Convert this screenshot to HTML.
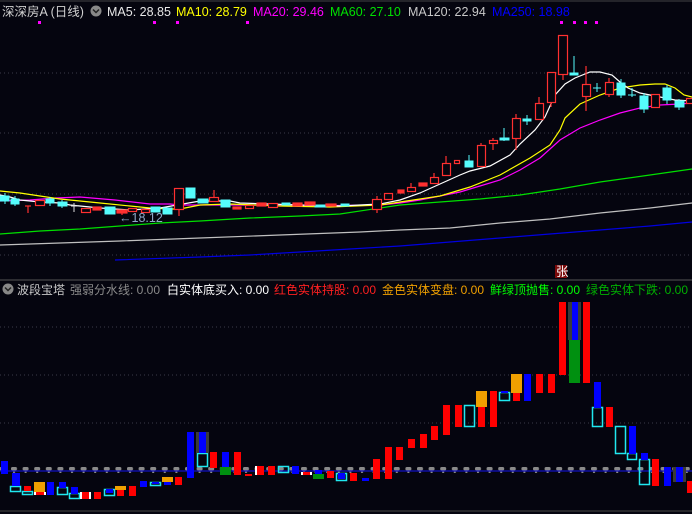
<!DOCTYPE html><html><head><meta charset="utf-8"><style>
html,body{margin:0;padding:0;background:#05050f;width:692px;height:514px;overflow:hidden}
svg{display:block}
text{font-family:"Liberation Sans","Noto Sans CJK SC",sans-serif;font-size:12.5px}
.lh text{font-size:12px}
</style></head><body>
<svg width="692" height="514" xmlns="http://www.w3.org/2000/svg">
<defs>
<pattern id="gd" x="11" y="0" width="11.6" height="514" patternUnits="userSpaceOnUse"><rect x="0" y="467" width="6" height="3.5" rx="1.5" fill="#8a8a8a"/><rect x="2" y="471" width="2" height="2" fill="#8a8a8a"/></pattern>
</defs>
<rect width="692" height="514" fill="#05050f"/>
<line x1="0" y1="1" x2="692" y2="1" stroke="#444" />
<g stroke="#3a3a4a" stroke-dasharray="1,3">
<line x1="0" y1="73" x2="692" y2="73"/><line x1="0" y1="133" x2="692" y2="133"/><line x1="0" y1="194" x2="692" y2="194"/><line x1="0" y1="255" x2="692" y2="255"/>
<line x1="0" y1="327" x2="692" y2="327"/><line x1="0" y1="375" x2="692" y2="375"/><line x1="0" y1="423" x2="692" y2="423"/>
</g>
<line x1="0" y1="280" x2="692" y2="280" stroke="#555" />
<line x1="0" y1="511" x2="692" y2="511" stroke="#333" stroke-width="1.5"/>
<!-- header -->
<text x="2" y="16" fill="#d0d0d0">深深房A (日线)</text>
<circle cx="96" cy="11" r="5.5" fill="#888"/><path d="M93 9.5 L96 12.5 L99 9.5" stroke="#222" stroke-width="1.5" fill="none"/>
<text x="107" y="16" fill="#e8e8e8">MA5: 28.85</text>
<text x="176" y="16" fill="#ffff00">MA10: 28.79</text>
<text x="253" y="16" fill="#ff00ff">MA20: 29.46</text>
<text x="330" y="16" fill="#00e000">MA60: 27.10</text>
<text x="408" y="16" fill="#c8c8c8">MA120: 22.94</text>
<text x="492" y="16" fill="#0000ff">MA250: 18.98</text>
<g fill="#ff00ff"><rect x="38" y="21" width="3" height="3"/><rect x="153" y="21" width="3" height="3"/><rect x="176" y="21" width="3" height="3"/><rect x="246" y="21" width="3" height="3"/><rect x="560" y="21" width="3" height="3"/><rect x="573" y="21" width="3" height="3"/><rect x="584" y="21" width="3" height="3"/><rect x="595" y="21" width="3" height="3"/></g>
<!-- MAs -->
<g fill="none" stroke-width="1.2">
<polyline stroke="#0000e0" points="115,260 200,257 250,255 300,252 350,249 400,246 450,242 500,238 550,234 600,230 650,226 692,222"/>
<polyline stroke="#c0c0c0" points="0,245 60,243 120,241 200,238 280,235 360,232 400,230 450,228 500,223 550,219 600,213 650,208 692,203"/>
<polyline stroke="#00e000" points="0,234 40,231 80,229 120,226 160,223 200,221 250,218 300,216 340,214 400,205 440,202 480,199 520,195 560,189 600,182 650,175 692,169"/>
<polyline stroke="#ff00ff" points="0,201 30,200 56,198 80,197 115,200 150,204 170,204 180,205 250,205 300,206 380,205 400,203 420,200 440,196 460,192 480,186 500,180 520,170 540,158 560,140 580,128 600,120 620,113 640,108 660,105 680,104 692,103"/>
<polyline stroke="#ffff00" points="0,191 20,193 40,196 60,199 80,201 100,203 130,206 150,208 170,209 180,209 200,205 230,204 280,206 330,207 380,205 400,202 440,196 470,187 500,175 530,158 550,145 560,130 565,118 580,104 600,95 620,88 640,85 655,84 665,84 675,88 684,95 692,97"/>
<polyline stroke="#ffffff" points="0,195 10,197 20,200 40,202 60,203 70,205 100,208 130,210 160,208 200,201 230,201 240,203 300,205 340,206 380,204 400,200 420,193 440,184 460,175 470,171 490,166 510,155 520,144 535,130 545,117 555,95 565,84 575,78 590,72 600,72 612,75 620,82 628,88 640,93 660,97 675,100 692,101"/>
</g>
<!-- candles: cyan filled -->
<g stroke="#55fcfc" fill="#55fcfc">
<line x1="5" y1="193" x2="5" y2="204"/><rect x="0" y="196" width="9" height="5"/>
<line x1="15" y1="196" x2="15" y2="206"/><rect x="11" y="199" width="8" height="5"/>
<line x1="50" y1="197" x2="50" y2="206"/><rect x="46" y="199" width="8" height="4"/>
<line x1="62" y1="200" x2="62" y2="208"/><rect x="58" y="202" width="9" height="4"/>
<line x1="74" y1="203" x2="74" y2="212" stroke="#ddd"/><line x1="71" y1="206" x2="78" y2="206" stroke="#ddd"/>
<rect x="105" y="207" width="10" height="7"/>
<rect x="151" y="207" width="9" height="5"/><rect x="163" y="208" width="9" height="6"/>
<rect x="186" y="188" width="9" height="10"/><rect x="198" y="199" width="10" height="4"/>
<rect x="221" y="200" width="9" height="7"/><rect x="282" y="203" width="8" height="2"/>
<rect x="315" y="205" width="11" height="2"/><rect x="341" y="204" width="8" height="2"/>
<line x1="469" y1="155" x2="469" y2="167"/><rect x="465" y="161" width="8" height="6"/>
<line x1="504" y1="128" x2="504" y2="141"/><rect x="500" y="138" width="9" height="2"/>
<line x1="527" y1="115" x2="527" y2="125"/><rect x="523" y="119" width="8" height="2"/>
<line x1="574" y1="56" x2="574" y2="75"/><rect x="570" y="73" width="8" height="2"/>
<line x1="597" y1="83" x2="597" y2="92"/><line x1="593" y1="88" x2="601" y2="88"/>
<line x1="621" y1="79" x2="621" y2="98"/><rect x="617" y="83" width="8" height="12"/>
<line x1="632" y1="88" x2="632" y2="97"/><line x1="628" y1="95" x2="636" y2="95"/>
<line x1="644" y1="93" x2="644" y2="113"/><rect x="640" y="96" width="8" height="13"/>
<line x1="667" y1="85" x2="667" y2="104"/><rect x="663" y="88" width="8" height="12"/>
<line x1="679" y1="99" x2="679" y2="110"/><rect x="675" y="101" width="9" height="6"/>
</g>
<!-- red candles -->
<g stroke="#ff3030" fill="#05050f" stroke-width="1.2">
<line x1="28" y1="206" x2="28" y2="213"/><line x1="25" y1="206" x2="31" y2="206"/>
<rect x="35.5" y="200.5" width="9" height="5"/>
<rect x="81.5" y="208.5" width="9" height="4"/><rect x="93" y="207" width="8" height="3" fill="#ff3030"/>
<line x1="122" y1="210" x2="122" y2="215"/><rect x="117" y="210" width="10" height="3" fill="#ff3030"/>
<rect x="128.5" y="208.5" width="8" height="3"/><rect x="141.5" y="209.5" width="8" height="3"/>
<line x1="179" y1="188" x2="179" y2="216"/><rect x="174.5" y="188.5" width="9" height="21"/>
<line x1="214" y1="190" x2="214" y2="197"/><rect x="209.5" y="197.5" width="9" height="4"/>
<rect x="233" y="207" width="8" height="2" fill="#ff3030"/><rect x="245.5" y="205.5" width="8" height="3"/>
<rect x="257" y="203" width="9" height="3" fill="#ff3030"/><rect x="268.5" y="203.5" width="9" height="4"/>
<rect x="293" y="203" width="9" height="3" fill="#ff3030"/><rect x="305" y="202" width="10" height="3" fill="#ff3030"/>
<rect x="326" y="204" width="10" height="2" fill="#ff3030"/>
<line x1="377" y1="196" x2="377" y2="213"/><rect x="372.5" y="199.5" width="9" height="10"/>
<rect x="384.5" y="193.5" width="8" height="6"/><rect x="398" y="190" width="6" height="3" fill="#ff3030"/>
<line x1="411" y1="183" x2="411" y2="192"/><rect x="407.5" y="187.5" width="8" height="4"/>
<rect x="419" y="183" width="8" height="3" fill="#ff3030"/>
<line x1="434" y1="173" x2="434" y2="184"/><rect x="430.5" y="177.5" width="8" height="6"/>
<line x1="446" y1="156" x2="446" y2="176"/><rect x="442.5" y="163.5" width="8" height="12"/>
<rect x="454.5" y="160.5" width="5" height="3"/>
<line x1="481" y1="143" x2="481" y2="167"/><rect x="477.5" y="145.5" width="8" height="21"/>
<line x1="493" y1="138" x2="493" y2="150"/><rect x="489.5" y="140.5" width="8" height="3"/>
<line x1="516" y1="114" x2="516" y2="150"/><rect x="512.5" y="118.5" width="8" height="20"/>
<line x1="539" y1="97" x2="539" y2="120"/><rect x="535.5" y="103.5" width="8" height="16"/>
<line x1="551" y1="72" x2="551" y2="107"/><rect x="547.5" y="72.5" width="8" height="30"/>
<line x1="563" y1="35" x2="563" y2="80"/><rect x="558.5" y="35.5" width="9" height="39"/>
<line x1="586" y1="66" x2="586" y2="111"/><rect x="582.5" y="84.5" width="8" height="12"/>
<line x1="609" y1="78" x2="609" y2="97"/><rect x="605.5" y="82.5" width="8" height="12"/>
<rect x="651.5" y="94.5" width="8" height="13"/>
<rect x="686.5" y="98.5" width="7" height="5"/>
</g>
<text x="119" y="222" fill="#8fa8c8" font-size="12">←18.12</text>
<!-- zhang -->
<rect x="555" y="265" width="12" height="13" fill="#7a0a0a"/><text x="556" y="276" fill="#fff" font-size="11">张</text>
<!-- lower header -->
<circle cx="8" cy="289" r="5.5" fill="#888"/><path d="M5 287.5 L8 290.5 L11 287.5" stroke="#222" stroke-width="1.5" fill="none"/>
<g class="lh">
<text x="17" y="294" fill="#c8c8c8">波段宝塔</text>
<text x="70" y="294" fill="#8a8a8a">强弱分水线: 0.00</text>
<text x="167" y="294" fill="#ffffff">白实体底买入: 0.00</text>
<text x="274" y="294" fill="#ff2020">红色实体持股: 0.00</text>
<text x="382" y="294" fill="#f0a000">金色实体变盘: 0.00</text>
<text x="490" y="294" fill="#00ff00">鲜绿顶抛售: 0.00</text>
<text x="586" y="294" fill="#00b000">绿色实体下跌: 0.00</text>
</g>
<!-- lower panel -->
<rect x="0" y="464" width="692" height="12" fill="url(#gd)"/>
<line x1="0" y1="471" x2="692" y2="471" stroke="#1010c0" stroke-width="1.2"/>
<g stroke="#20e8f0" fill="none" stroke-width="1.5">
<rect x="10.5" y="486.5" width="10" height="5"/><rect x="22.5" y="491.5" width="10" height="3"/>
<rect x="57.5" y="487.5" width="10" height="7"/><rect x="69.5" y="493.5" width="10" height="5"/>
<rect x="104.5" y="489.5" width="10" height="6"/><rect x="150.5" y="482.5" width="10" height="3"/>
<rect x="197.5" y="453.5" width="10" height="13"/><rect x="278.5" y="466.5" width="10" height="6"/>
<rect x="336.5" y="473.5" width="10" height="7"/>
<rect x="464.5" y="405.5" width="10" height="21"/><rect x="499.5" y="392.5" width="10" height="8"/>
<rect x="592.5" y="407.5" width="10" height="19"/><rect x="615.5" y="426.5" width="10" height="27"/>
<rect x="627.5" y="453.5" width="9" height="6"/><rect x="639.5" y="459.5" width="10" height="25"/>
</g>
<g fill="#ff0000">
<rect x="24" y="486" width="7" height="5"/><rect x="36" y="492" width="8" height="3"/>
<rect x="82" y="492" width="7" height="7"/><rect x="94" y="492" width="7" height="7"/>
<rect x="117" y="490" width="7" height="6"/><rect x="129" y="486" width="7" height="10"/>
<rect x="175" y="477" width="7" height="8"/><rect x="210" y="452" width="7" height="16"/>
<rect x="234" y="452" width="7" height="23"/><rect x="245" y="474" width="7" height="2"/>
<rect x="257" y="466" width="7" height="9"/><rect x="268" y="466" width="7" height="9"/>
<rect x="303" y="472" width="7" height="3"/><rect x="327" y="471" width="7" height="7"/><rect x="350" y="473" width="7" height="8"/>
<rect x="373" y="459" width="7" height="20"/><rect x="385" y="447" width="7" height="32"/><rect x="396" y="447" width="7" height="13"/>
<rect x="408" y="439" width="7" height="9"/><rect x="420" y="434" width="7" height="14"/><rect x="431" y="426" width="7" height="14"/>
<rect x="443" y="405" width="7" height="30"/><rect x="455" y="405" width="7" height="22"/><rect x="478" y="405" width="7" height="22"/>
<rect x="490" y="391" width="7" height="36"/><rect x="513" y="393" width="7" height="8"/><rect x="536" y="374" width="7" height="19"/>
<rect x="548" y="374" width="7" height="19"/><rect x="559" y="302" width="7" height="73"/><rect x="583" y="302" width="7" height="81"/>
<rect x="606" y="407" width="7" height="20"/><rect x="652" y="459" width="7" height="27"/><rect x="687" y="481" width="7" height="12"/>
</g>
<g fill="#ffffff"><rect x="34" y="492" width="2" height="3"/><rect x="44" y="492" width="2" height="3"/><rect x="80" y="492" width="2" height="7"/><rect x="89" y="492" width="2" height="7"/><rect x="255" y="466" width="2" height="9"/><rect x="301" y="472" width="2" height="3"/><rect x="310" y="472" width="2" height="3"/></g>
<g fill="#f0a000">
<rect x="34" y="482" width="11" height="10"/><rect x="115" y="486" width="11" height="4"/><rect x="162" y="477" width="11" height="5"/>
<rect x="476" y="391" width="11" height="16"/><rect x="511" y="374" width="11" height="19"/>
</g>
<g fill="#3a3a3a"><rect x="196" y="432" width="13" height="21"/><rect x="568" y="302" width="13" height="38"/><rect x="673" y="467" width="13" height="15"/></g>
<g fill="#009010"><rect x="220" y="467" width="11" height="8"/><rect x="313" y="474" width="11" height="5"/><rect x="569" y="340" width="11" height="43"/></g>
<g fill="#0000ff">
<rect x="1" y="461" width="7" height="13"/><rect x="12" y="473" width="8" height="13"/><rect x="47" y="482" width="7" height="13"/>
<rect x="59" y="482" width="7" height="6"/><rect x="71" y="487" width="7" height="7"/><rect x="106" y="489" width="7" height="4"/>
<rect x="140" y="481" width="7" height="6"/><rect x="152" y="482" width="7" height="2"/><rect x="164" y="482" width="7" height="3"/>
<rect x="187" y="432" width="7" height="46"/><rect x="199" y="432" width="7" height="21"/><rect x="222" y="452" width="7" height="15"/>
<rect x="292" y="466" width="7" height="8"/><rect x="315" y="470" width="7" height="4"/><rect x="338" y="473" width="7" height="6"/>
<rect x="362" y="478" width="7" height="3"/><rect x="501" y="391" width="7" height="2"/><rect x="524" y="374" width="7" height="27"/>
<rect x="572" y="302" width="6" height="38"/><rect x="594" y="382" width="7" height="26"/><rect x="629" y="426" width="7" height="28"/>
<rect x="641" y="453" width="7" height="7"/><rect x="664" y="467" width="7" height="19"/><rect x="676" y="467" width="7" height="15"/>
</g>
</svg>
</body></html>
